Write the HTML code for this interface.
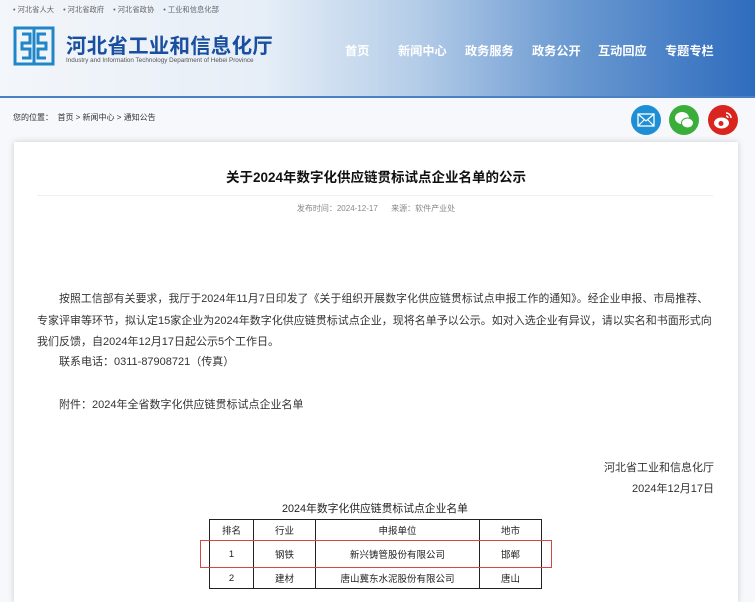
<!DOCTYPE html>
<html><head><meta charset="utf-8">
<style>
*{margin:0;padding:0;box-sizing:border-box}
body{width:755px;height:588px;overflow:hidden;background:#f6f8fb;font-family:"Liberation Sans","Noto Sans CJK SC",sans-serif;position:relative}
.hd{position:absolute;left:0;top:0;width:755px;height:98px;background:linear-gradient(90deg,#f3f6fa 0%,#e6eef7 35%,#b5cde8 55%,#6d9bd2 75%,#2e6cbd 100%);border-bottom:2px solid #4a80c4}
.tl{position:absolute;top:5px;left:13px;font-size:7.3px;color:#666;white-space:nowrap}
.tl span{margin-right:9px}
.nav{position:absolute;top:41px;font-size:12.2px;font-weight:bold;color:#fff;white-space:nowrap}
.abs{position:absolute;white-space:nowrap}
.box{position:absolute;left:14px;top:142px;width:724px;height:460px;background:#fff;box-shadow:0 0 6px rgba(0,0,0,.18)}
.p{position:absolute;left:37px;width:671px;font-size:11px;color:#333;text-align:justify;text-align-last:justify;white-space:nowrap}
table{position:absolute;left:209px;top:519px;border-collapse:collapse;font-size:9.5px;color:#222}
td{border:1.5px solid #222;text-align:center;padding:0}
.ic{position:absolute;top:105px;width:30px;height:30px;border-radius:50%}
</style></head><body>
<div class="hd">
 <div class="tl"><span>• 河北省人大</span><span>• 河北省政府</span><span>• 河北省政协</span><span>• 工业和信息化部</span></div>
 <svg style="position:absolute;left:13px;top:26px" width="42" height="40" viewBox="0 0 42 40" fill="none" stroke="#1f86c8" stroke-width="3">
  <rect x="2" y="2" width="38" height="36"/>
  <path d="M9 8h8v9h-8v6h8v9h-8"/><path d="M33 8h-8v9h8v6h-8v9h8"/><path d="M21 2v36"/>
 </svg>
 <div class="abs" style="left:66px;top:29px;font-size:20.5px;font-weight:bold;color:#1a4fa0;letter-spacing:0.2px">河北省工业和信息化厅</div>
 <div class="abs" style="left:66px;top:57px;font-size:6.3px;color:#555">Industry and Information Technology Department of Hebei Province</div>
 <div class="nav" style="left:345px">首页</div>
 <div class="nav" style="left:398px">新闻中心</div>
 <div class="nav" style="left:465px">政务服务</div>
 <div class="nav" style="left:532px">政务公开</div>
 <div class="nav" style="left:598px">互动回应</div>
 <div class="nav" style="left:665px">专题专栏</div>
</div>
<div class="abs" style="left:13px;top:112px;font-size:8px;color:#333">您的位置： &nbsp;首页 &gt; 新闻中心 &gt; 通知公告</div>
<div class="ic" style="left:631px;background:#1e8fd5"><svg width="30" height="30"><rect x="7" y="9" width="16" height="12" fill="none" stroke="#fff" stroke-width="1.3"/><path d="M7 9l8 7 8-7M7 21l6-6M23 21l-6-6" fill="none" stroke="#fff" stroke-width="1.2"/></svg></div>
<div class="ic" style="left:669px;background:#3aad3a"><svg width="30" height="30"><ellipse cx="13" cy="13" rx="7" ry="6" fill="#fff"/><ellipse cx="18.5" cy="18" rx="6" ry="5" fill="#fff" stroke="#3aad3a" stroke-width="1"/></svg></div>
<div class="ic" style="left:708px;background:#d9251d"><svg width="30" height="30"><ellipse cx="13.5" cy="18" rx="7.5" ry="5.5" fill="#fff"/><circle cx="13" cy="18.5" r="2.5" fill="#d9251d"/><path d="M18 8a5 5 0 0 1 5 5M18 11a2 2 0 0 1 2 2" stroke="#fff" stroke-width="1.5" fill="none"/></svg></div>
<div class="box">
 <div class="abs" style="left:0;width:724px;top:24px;text-align:center;font-size:13.5px;font-weight:bold;color:#111">关于2024年数字化供应链贯标试点企业名单的公示</div>
 <div class="abs" style="left:23px;width:676px;top:53px;border-top:1px solid #f0f0f0"></div>
 <div class="abs" style="left:0;width:724px;top:61px;text-align:center;font-size:8px;color:#888">发布时间：2024-12-17 &nbsp; &nbsp; &nbsp;来源：软件产业处</div>
 <div class="p" style="top:148px;left:45px;width:649px;font-size:10.8px">按照工信部有关要求，我厅于2024年11月7日印发了《关于组织开展数字化供应链贯标试点申报工作的通知》。经企业申报、市局推荐、</div>
 <div class="p" style="top:170px;left:23px;width:671px">专家评审等环节，拟认定15家企业为2024年数字化供应链贯标试点企业，现将名单予以公示。如对入选企业有异议，请以实名和书面形式向</div>
 <div class="p" style="top:191px;left:23px;width:auto;text-align-last:auto">我们反馈，自2024年12月17日起公示5个工作日。</div>
 <div class="p" style="top:211px;left:45px;width:auto;text-align-last:auto">联系电话：0311-87908721（传真）</div>
 <div class="p" style="top:254px;left:45px;width:auto;text-align-last:auto">附件：2024年全省数字化供应链贯标试点企业名单</div>
 <div class="abs" style="right:24px;top:317px;font-size:11px;color:#333">河北省工业和信息化厅</div>
 <div class="abs" style="right:24px;top:338px;font-size:11px;color:#333">2024年12月17日</div>
 <div class="abs" style="left:268px;top:358px;font-size:10.8px;color:#222">2024年数字化供应链贯标试点企业名单</div>
</div>
<table>
<tr style="height:21px"><td style="width:44px">排名</td><td style="width:62px">行业</td><td style="width:164px">申报单位</td><td style="width:62px">地市</td></tr>
<tr style="height:27px"><td>1</td><td>钢铁</td><td>新兴铸管股份有限公司</td><td>邯郸</td></tr>
<tr style="height:21px"><td>2</td><td>建材</td><td>唐山冀东水泥股份有限公司</td><td>唐山</td></tr>
</table>
<div class="abs" style="left:200px;top:540px;width:352px;height:28px;border:1.5px solid #d9453f"></div>
</body></html>
